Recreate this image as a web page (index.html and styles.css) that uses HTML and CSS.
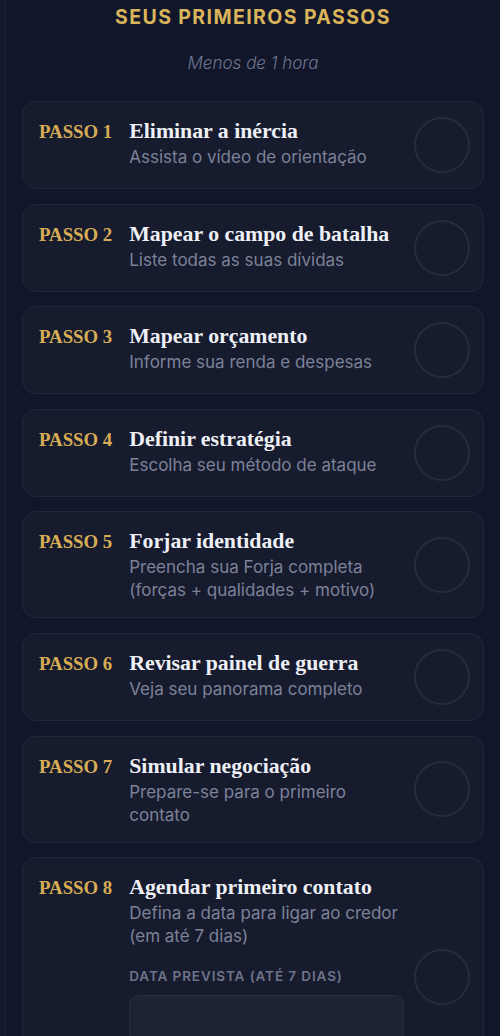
FILE: index.html
```html
<!DOCTYPE html>
<html lang="pt-BR">
<head>
    <meta charset="UTF-8">
    <meta name="viewport" content="width=device-width, initial-scale=1.0">
    <title>Seus primeiros passos</title>
    <link rel="stylesheet" href="styles.css">
</head>
<body>
    <main class="panel">
        <h1 class="panel-title">SEUS PRIMEIROS PASSOS</h1>
        <p class="panel-subtitle">Menos de 1 hora</p>

        <ul class="steps">
            <li class="step">
                <div class="step-main">
                    <span class="step-label">PASSO 1</span>
                    <div class="step-text">
                        <h2>Eliminar a inércia</h2>
                        <p>Assista o vídeo de orientação</p>
                    </div>
                </div>
                <span class="step-check"></span>
            </li>
            <li class="step">
                <div class="step-main">
                    <span class="step-label">PASSO 2</span>
                    <div class="step-text">
                        <h2>Mapear o campo de batalha</h2>
                        <p>Liste todas as suas dívidas</p>
                    </div>
                </div>
                <span class="step-check"></span>
            </li>
            <li class="step">
                <div class="step-main">
                    <span class="step-label">PASSO 3</span>
                    <div class="step-text">
                        <h2>Mapear orçamento</h2>
                        <p>Informe sua renda e despesas</p>
                    </div>
                </div>
                <span class="step-check"></span>
            </li>
            <li class="step">
                <div class="step-main">
                    <span class="step-label">PASSO 4</span>
                    <div class="step-text">
                        <h2>Definir estratégia</h2>
                        <p>Escolha seu método de ataque</p>
                    </div>
                </div>
                <span class="step-check"></span>
            </li>
            <li class="step">
                <div class="step-main">
                    <span class="step-label">PASSO 5</span>
                    <div class="step-text">
                        <h2>Forjar identidade</h2>
                        <p>Preencha sua Forja completa (forças + qualidades + motivo)</p>
                    </div>
                </div>
                <span class="step-check"></span>
            </li>
            <li class="step">
                <div class="step-main">
                    <span class="step-label">PASSO 6</span>
                    <div class="step-text">
                        <h2>Revisar painel de guerra</h2>
                        <p>Veja seu panorama completo</p>
                    </div>
                </div>
                <span class="step-check"></span>
            </li>
            <li class="step">
                <div class="step-main">
                    <span class="step-label">PASSO 7</span>
                    <div class="step-text">
                        <h2>Simular negociação</h2>
                        <p>Prepare-se para o primeiro contato</p>
                    </div>
                </div>
                <span class="step-check"></span>
            </li>
            <li class="step">
                <div class="step-main">
                    <span class="step-label">PASSO 8</span>
                    <div class="step-text">
                        <h2>Agendar primeiro contato</h2>
                        <p>Defina a data para ligar ao credor (em até 7 dias)</p>
                        <label class="date-label" for="data-prevista">DATA PREVISTA (ATÉ 7 DIAS)</label>
                        <input class="date-input" type="text" id="data-prevista">
                    </div>
                </div>
                <span class="step-check"></span>
            </li>
        </ul>
    </main>
</body>
</html>
```

FILE: styles.css
```css
body {
    margin: 0;
    padding: 0;
    background-color: #151a2c;
    font-family: Inter, "Noto Sans", sans-serif;
}

.panel {
    margin-left: 5px;
    min-height: 1036px;
    padding: 5px 16px 40px;
    background-color: #11162a;
    border-left: 1px solid #1d2235;
}

.panel-title {
    margin: 0;
    text-align: center;
    color: #d9b45a;
    font-size: 19.5px;
    line-height: 24px;
    font-weight: 700;
    letter-spacing: 1.4px;
}

.panel-subtitle {
    margin: 24px 0 28px;
    text-align: center;
    color: #6f7690;
    font-size: 17px;
    font-style: italic;
    font-weight: 300;
    line-height: 20px;
}

.steps {
    list-style: none;
    margin: 0;
    padding: 0;
    display: flex;
    flex-direction: column;
    gap: 14.6px;
}

.step {
    display: flex;
    align-items: center;
    padding: 15px 13px 15px 16px;
    background-color: #171b2e;
    border: 1px solid #22273a;
    border-radius: 14px;
}

.step-main {
    flex: 1;
    display: flex;
    align-items: baseline;
    align-self: flex-start;
    gap: 17px;
}

.step-label {
    flex-shrink: 0;
    color: #d6ad55;
    font-family: "Liberation Serif", "DejaVu Serif", serif;
    font-size: 18.8px;
    font-weight: 700;
}

.step-text {
    flex: 1;
}

.step-text h2 {
    margin: 0;
    color: #eef0f6;
    font-family: "Liberation Serif", "DejaVu Serif", serif;
    font-size: 21.8px;
    font-weight: 700;
    line-height: 29px;
}

.step-text p {
    margin: 0;
    color: #7c8298;
    font-size: 17px;
    line-height: 23px;
}

.step-check {
    flex-shrink: 0;
    width: 52px;
    height: 52px;
    margin-left: 10px;
    border: 2px solid #262b3d;
    border-radius: 50%;
}

.date-label {
    display: block;
    margin-top: 19px;
    color: #6d7489;
    font-size: 13.5px;
    font-weight: 600;
    letter-spacing: 0.9px;
    line-height: 18px;
}

.date-input {
    display: block;
    width: 100%;
    height: 48px;
    margin-top: 10px;
    margin-bottom: 38px;
    background-color: #1e2235;
    border: 1px solid #282d40;
    border-radius: 10px;
    box-sizing: border-box;
}
```
